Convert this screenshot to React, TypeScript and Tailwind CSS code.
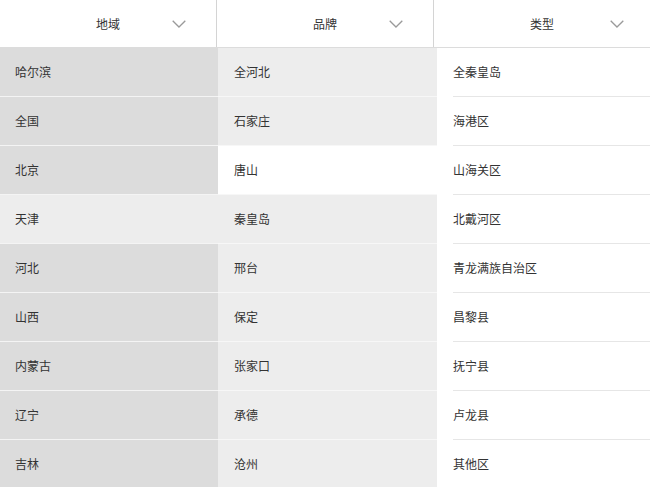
import React from "react";

const col1 = ["哈尔滨", "全国", "北京", "天津", "河北", "山西", "内蒙古", "辽宁", "吉林"];
const col2 = ["全河北", "石家庄", "唐山", "秦皇岛", "邢台", "保定", "张家口", "承德", "沧州"];
const col3 = ["全秦皇岛", "海港区", "山海关区", "北戴河区", "青龙满族自治区", "昌黎县", "抚宁县", "卢龙县", "其他区"];

function Chevron({ last }: { last?: boolean }) {
  return (
    <svg
      width="14"
      height="8"
      viewBox="0 0 14 8"
      className={"absolute top-[20px] " + (last ? "right-[26px]" : "right-[30px]")}
    >
      <path d="M0.7 0.7 L7 7 L13.3 0.7" fill="none" stroke="#9a9a9a" strokeWidth="1.3" />
    </svg>
  );
}

function HeaderCell({ label, last }: { label: string; last?: boolean }) {
  return (
    <div
      className={
        "relative flex h-[47px] items-center justify-center " +
        (last ? "flex-1" : "w-[217px] border-r border-[#d4d4d4]")
      }
    >
      <span className="text-[12px] text-[#333]">{label}</span>
      <Chevron last={last} />
    </div>
  );
}

export default function App() {
  return (
    <div
      className="h-[487px] w-[650px] overflow-hidden bg-white"
      style={{ fontFamily: '"Noto Sans CJK SC", "Noto Sans", sans-serif' }}
    >
      <div className="flex border-b border-[#dcdcdc]">
        <HeaderCell label="地域" />
        <HeaderCell label="品牌" />
        <HeaderCell label="类型" last />
      </div>
      <div className="flex">
        <div className="w-[218px] bg-[#dcdcdc]">
          {col1.map((t, i) => (
            <div
              key={t}
              className={
                "flex h-[49px] items-center border-b border-[#f4f4f4] pl-[15px] text-[12px] text-[#333] " +
                (i === 3 ? "bg-[#ededed]" : "")
              }
            >
              {t}
            </div>
          ))}
        </div>
        <div className="w-[219px] bg-[#ededed]">
          {col2.map((t, i) => (
            <div
              key={t}
              className={
                "flex h-[49px] items-center border-b border-[#f7f7f7] pl-[16px] text-[12px] text-[#333] " +
                (i === 2 ? "bg-white" : "")
              }
            >
              {t}
            </div>
          ))}
        </div>
        <div className="w-[213px] bg-white pl-[16px]">
          {col3.map((t) => (
            <div
              key={t}
              className="flex h-[49px] items-center border-b border-[#e6e6e6] text-[12px] text-[#333]"
            >
              {t}
            </div>
          ))}
        </div>
      </div>
    </div>
  );
}
